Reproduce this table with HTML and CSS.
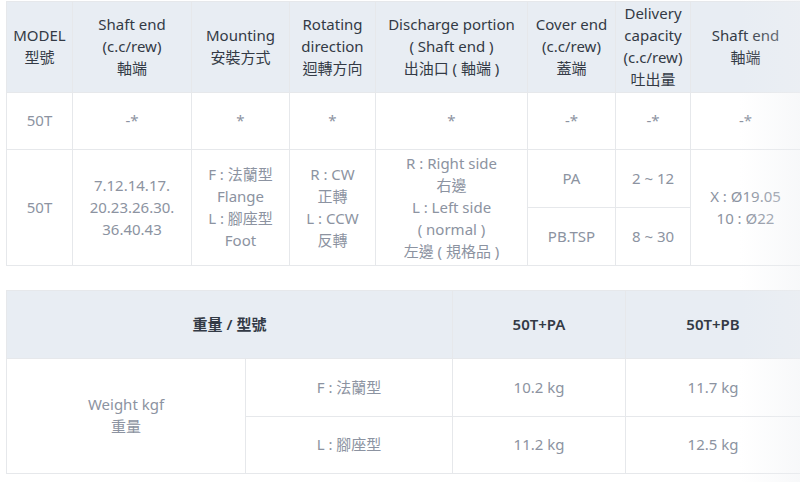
FILE: index.html
```html
<!doctype html>
<html>
  <head>
    <meta charset="utf-8">
    <title>50T spec</title>
    <link rel="stylesheet" href="styles.css">
  </head>
  <body>
    <div class="scroller">
      <table class="spec">
        <colgroup>
          <col style="width:66px"><col style="width:119px"><col style="width:98px"><col style="width:86px">
          <col style="width:152px"><col style="width:88px"><col style="width:75px"><col style="width:110px">
        </colgroup>
        <thead>
          <tr class="head">
            <th>MODEL<br>型號</th>
            <th>Shaft end<br>(c.c/rew)<br>軸端</th>
            <th>Mounting<br>安裝方式</th>
            <th>Rotating<br>direction<br>迴轉方向</th>
            <th>Discharge portion<br>( Shaft end )<br>出油口 ( 軸端 )</th>
            <th>Cover end<br>(c.c/rew)<br>蓋端</th>
            <th>Delivery<br>capacity<br>(c.c/rew)<br>吐出量</th>
            <th>Shaft end<br>軸端</th>
          </tr>
        </thead>
        <tbody>
          <tr class="r57">
            <td>50T</td>
            <td>-*</td>
            <td>*</td>
            <td>*</td>
            <td>*</td>
            <td>-*</td>
            <td>-*</td>
            <td>-*</td>
          </tr>
          <tr class="r58">
            <td rowspan="2">50T</td>
            <td rowspan="2">7.12.14.17.<br>20.23.26.30.<br>36.40.43</td>
            <td rowspan="2">F : 法蘭型<br>Flange<br>L : 腳座型<br>Foot</td>
            <td rowspan="2">R : CW<br>正轉<br>L : CCW<br>反轉</td>
            <td rowspan="2">R : Right side<br>右邊<br>L : Left side<br>( normal )<br>左邊 ( 規格品 )</td>
            <td>PA</td>
            <td>2 ~ 12</td>
            <td rowspan="2">X : Ø19.05<br>10 : Ø22</td>
          </tr>
          <tr class="r58">
            <td>PB.TSP</td>
            <td>8 ~ 30</td>
          </tr>
        </tbody>
      </table>

      <table class="spec weight">
        <colgroup>
          <col style="width:239px"><col style="width:207px"><col style="width:173px"><col style="width:175px">
        </colgroup>
        <thead>
          <tr class="head2">
            <th colspan="2">重量 / 型號</th>
            <th>50T+PA</th>
            <th>50T+PB</th>
          </tr>
        </thead>
        <tbody>
          <tr class="r58">
            <td rowspan="2">Weight kgf<br>重量</td>
            <td>F : 法蘭型</td>
            <td>10.2 kg</td>
            <td>11.7 kg</td>
          </tr>
          <tr class="r57">
            <td>L : 腳座型</td>
            <td>11.2 kg</td>
            <td>12.5 kg</td>
          </tr>
        </tbody>
      </table>
    </div>
  </body>
</html>
```

FILE: styles.css
```css
html, body {
  margin: 0;
  padding: 0;
  background: #fff;
}
body {
  font-family: "Noto Sans", "Noto Sans CJK TC", sans-serif;
  font-size: 15px;
  line-height: 22px;
  color: #8c93a1;
}
.scroller {
  position: relative;
  width: 800px;
  height: 482px;
  overflow: hidden;
  padding: 1px 0 0 6px;
  box-sizing: border-box;
}
.scroller::after {
  content: "";
  position: absolute;
  top: 0;
  right: 0;
  width: 60px;
  height: 100%;
  background: linear-gradient(to right, rgba(238,240,243,0), rgba(238,240,243,0.45));
  pointer-events: none;
}
.spec {
  border-collapse: collapse;
  table-layout: fixed;
  width: 794px;
  text-align: center;
}
.spec th,
.spec td {
  border: 1px solid #e6e8eb;
  padding: 0 2px 2px;
  vertical-align: middle;
}
.spec th {
  background: #e8edf3;
  color: #333a45;
  font-weight: normal;
}
.head th {
  height: 88px;
}
.r57 td {
  height: 54px;
}
.r58 td {
  height: 55px;
}
.weight {
  margin-top: 24px;
}
.head2 th {
  height: 65px;
  font-weight: 600;
}
```
